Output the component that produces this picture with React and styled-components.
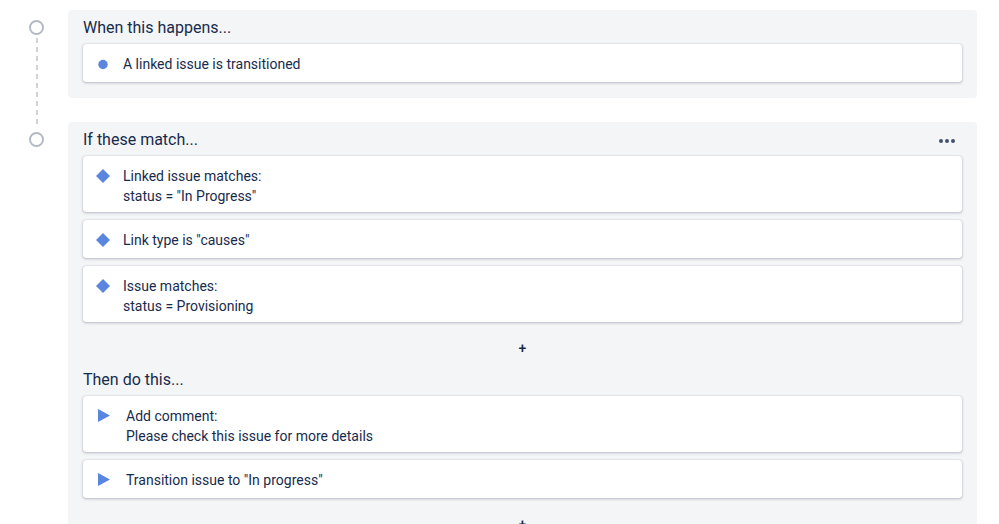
import React from 'react';
import styled, { createGlobalStyle } from 'styled-components';

const GlobalStyle = createGlobalStyle`
  body {
    margin: 0;
    background: #ffffff;
    font-family: Roboto, "Liberation Sans", sans-serif;
    color: #172b4d;
  }
`;

const steps = [
  {
    id: 'trigger',
    sections: [
      {
        title: 'When this happens...',
        items: [{ icon: 'dot', lines: ['A linked issue is transitioned'] }],
      },
    ],
  },
  {
    id: 'conditions',
    menu: true,
    sections: [
      {
        title: 'If these match...',
        items: [
          { icon: 'diamond', lines: ['Linked issue matches:', 'status = "In Progress"'] },
          { icon: 'diamond', lines: ['Link type is "causes"'] },
          { icon: 'diamond', lines: ['Issue matches:', 'status = Provisioning'] },
        ],
      },
      {
        title: 'Then do this...',
        items: [
          { icon: 'play', lines: ['Add comment:', 'Please check this issue for more details'] },
          { icon: 'play', lines: ['Transition issue to "In progress"'] },
        ],
      },
    ],
  },
];

const ItemIcon = ({ type }) => {
  if (type === 'dot') {
    return (
      <IconBox>
        <svg width="16" height="22" viewBox="0 0 16 22">
          <circle cx="8" cy="12.5" r="4.7" fill="#5a86e0" />
        </svg>
      </IconBox>
    );
  }
  if (type === 'diamond') {
    return (
      <IconBox>
        <svg width="16" height="22" viewBox="0 0 16 22">
          <polygon points="8,5 15,12 8,19 1,12" fill="#5a86e0" />
        </svg>
      </IconBox>
    );
  }
  return (
    <IconBox wide>
      <svg width="19" height="22" viewBox="0 0 19 22">
        <polygon points="3,5 15,11.5 3,18" fill="#5a86e0" />
      </svg>
    </IconBox>
  );
};

const MoreIcon = () => (
  <svg width="16" height="4" viewBox="0 0 16 4">
    <circle cx="2" cy="2" r="2" fill="#42526e" />
    <circle cx="8" cy="2" r="2" fill="#42526e" />
    <circle cx="14" cy="2" r="2" fill="#42526e" />
  </svg>
);

const App = () => (
  <>
    <GlobalStyle />
    <Timeline>
      {steps.map((step, i) => (
        <Step key={step.id}>
          <Marker>
            <Circle />
            {i < steps.length - 1 && <Connector />}
          </Marker>
          <Panel>
            {step.sections.map((section, si) => (
              <Section key={section.title}>
                <TitleRow>
                  <Title>{section.title}</Title>
                  {step.menu && si === 0 && (
                    <MoreButton>
                      <MoreIcon />
                    </MoreButton>
                  )}
                </TitleRow>
                <CardList>
                  {section.items.map((item) => (
                    <Card key={item.lines[0]}>
                      <ItemIcon type={item.icon} />
                      <CardText>
                        {item.lines.map((line) => (
                          <Line key={line}>{line}</Line>
                        ))}
                      </CardText>
                    </Card>
                  ))}
                </CardList>
                {step.id !== 'trigger' && <AddRow>+</AddRow>}
              </Section>
            ))}
          </Panel>
        </Step>
      ))}
    </Timeline>
  </>
);

const Timeline = styled.div`
  display: flex;
  flex-direction: column;
  gap: 24px;
  padding: 10px 22px 40px 0;
`;

const Step = styled.div`
  display: flex;
`;

const Marker = styled.div`
  display: flex;
  flex-direction: column;
  align-items: center;
  flex-shrink: 0;
  width: 15px;
  margin: 0 24px 0 29px;
  padding-top: 10px;
`;

const Circle = styled.div`
  box-sizing: border-box;
  width: 15px;
  height: 15px;
  border: 2px solid #b3bac5;
  border-radius: 50%;
  flex-shrink: 0;
`;

const Connector = styled.div`
  flex: 1;
  width: 2px;
  margin-top: 3px;
  margin-bottom: -29px;
  background: repeating-linear-gradient(
    to bottom,
    #cfd4db 0 5px,
    transparent 5px 9px
  );
`;

const Panel = styled.div`
  flex: 1;
  background: #f4f5f7;
  border-radius: 4px;
  padding: 8px 15px 16px;
`;

const Section = styled.div`
  display: flex;
  flex-direction: column;
`;

const TitleRow = styled.div`
  display: flex;
  align-items: center;
  justify-content: space-between;
  margin-bottom: 6px;
`;

const Title = styled.h3`
  margin: 0;
  font-size: 16px;
  line-height: 20px;
  font-weight: 400;
  color: #172b4d;
`;

const MoreButton = styled.div`
  display: flex;
  align-items: center;
  padding: 2px 7px 0 0;
`;

const CardList = styled.div`
  display: flex;
  flex-direction: column;
  gap: 8px;
`;

const Card = styled.div`
  display: flex;
  align-items: flex-start;
  gap: 12px;
  background: #ffffff;
  border-radius: 3px;
  padding: 8px 16px 6px 12px;
  box-shadow: 0 1px 3px rgba(9, 30, 66, 0.25), 0 0 1px rgba(9, 30, 66, 0.31);
`;

const IconBox = styled.div`
  display: flex;
  flex-shrink: 0;
  width: ${({ wide }) => (wide ? '19px' : '16px')};
  height: 24px;
`;

const CardText = styled.div`
  display: flex;
  flex-direction: column;
  padding-top: 2px;
`;

const Line = styled.span`
  font-size: 14px;
  line-height: 20px;
  color: #172b4d;
`;

const AddRow = styled.div`
  display: flex;
  align-items: center;
  justify-content: center;
  height: 48px;
  padding-top: 3px;
  box-sizing: border-box;
  font-size: 14px;
  font-weight: 500;
  color: #172b4d;
`;

export default App;
